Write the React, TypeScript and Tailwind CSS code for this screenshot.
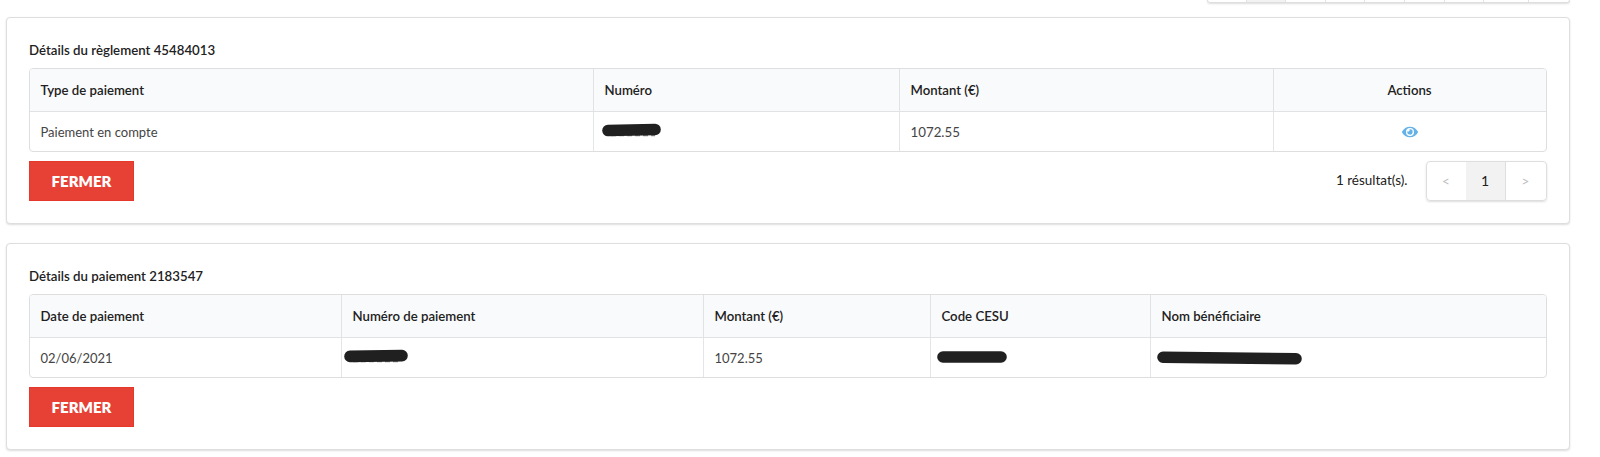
import React from 'react';
import { FaEye } from 'react-icons/fa';

interface Column {
  label: string;
  className: string;
}

interface MaskProps {
  width: number;
  tilt: number;
  ghost?: number;
}

const PAYMENT_COLUMNS: Column[] = [
  { label: 'Type de paiement', className: 'w-[563px] text-left' },
  { label: 'Numéro', className: 'w-[306px] text-left' },
  { label: 'Montant (€)', className: 'w-[374px] text-left' },
  { label: 'Actions', className: 'text-center' },
];

const DETAIL_COLUMNS: Column[] = [
  { label: 'Date de paiement', className: 'w-[311px] text-left' },
  { label: 'Numéro de paiement', className: 'w-[362px] text-left' },
  { label: 'Montant (€)', className: 'w-[227px] text-left' },
  { label: 'Code CESU', className: 'w-[220px] text-left' },
  { label: 'Nom bénéficiaire', className: 'text-left' },
];

// Marker stroke covering a sensitive value
const Mask: React.FC<MaskProps> = ({ width, tilt, ghost = 0 }) => (
  <svg width={width} height="16" viewBox={`0 0 ${width} 16`} className="block">
    {ghost > 0 && (
      <line x1="9" y1="13.6" x2={9 + ghost} y2="13.6" stroke="#8a8a8a" strokeWidth="1.4" strokeDasharray="5 3" />
    )}
    <line x1="6" y1={8 - tilt} x2={width - 6} y2={8 + tilt} stroke="#202020" strokeWidth="11.6" strokeLinecap="round" />
  </svg>
);

const Card: React.FC<{ title: string; children: React.ReactNode }> = ({ title, children }) => (
  <section className="h-[207px] rounded border border-[#dededf] bg-white px-[22px] pt-[22px] shadow-[0_1px_2px_0_rgba(34,36,38,0.15)]">
    <h2 className="mb-[8px] h-5 text-[13.25px] leading-5 font-semibold text-[#212121]">{title}</h2>
    {children}
  </section>
);

const DataTable: React.FC<{ columns: Column[]; children: React.ReactNode }> = ({ columns, children }) => (
  <div className="overflow-hidden rounded border border-[#dededf]">
    <table className="w-full table-fixed border-collapse text-[13px] leading-5">
      <thead>
        <tr className="h-[42px] border-b border-[#e1e2e3] bg-[#f9fafb] text-[13.2px]">
          {columns.map((column) => (
            <th key={column.label} className={`border-l border-[#e1e2e3] px-[11px] font-semibold text-[#212121] first:border-l-0 first:pl-[10.5px] ${column.className}`}>
              {column.label}
            </th>
          ))}
        </tr>
      </thead>
      <tbody>
        <tr className="h-[40px]">{children}</tr>
      </tbody>
    </table>
  </div>
);

const Cell: React.FC<{ className?: string; children: React.ReactNode }> = ({ className = 'px-[11px] pt-[2px]', children }) => (
  <td className={`border-l border-[#e4e5e6] text-[#444444] first:border-l-0 first:pl-[10.5px] ${className}`}>{children}</td>
);

const CloseButton: React.FC = () => (
  <button className="h-10 w-[105px] border border-[#e5372c] bg-[#e74135] text-[15px] leading-5 font-extrabold text-white">
    FERMER
  </button>
);

const App: React.FC = () => (
  <div className="h-[457px] overflow-hidden bg-white pr-[30.5px] pl-[6px] font-[Lato,sans-serif]">
    {/* Bottom edge of the pagination of the list above */}
    <div className="flex h-[17px] items-start justify-end">
      <div className="flex h-[3px] w-[363px] overflow-visible rounded-b border border-t-0 border-[#dededf] shadow-[0_1px_2px_0_rgba(34,36,38,0.15)]">
        <div className="w-[38px]" />
        <div className="w-10 border-x border-[#e1e2e3] bg-[#f2f2f2]" />
        <div className="w-10 border-r border-[#e1e2e3]" />
        <div className="w-[39px] border-r border-[#e1e2e3]" />
        <div className="w-10 border-r border-[#e1e2e3]" />
        <div className="w-10 border-r border-[#e1e2e3]" />
        <div className="w-[39px] border-r border-[#e1e2e3]" />
        <div className="w-[45px] border-r border-[#e1e2e3]" />
      </div>
    </div>

    <main className="flex flex-col gap-[19px]">
      <Card title="Détails du règlement 45484013">
        <DataTable columns={PAYMENT_COLUMNS}>
          <Cell>Paiement en compte</Cell>
          <Cell className="pb-[3px] pl-[8px]">
            <Mask width={59} tilt={-0.5} ghost={44} />
          </Cell>
          <Cell className="px-[11px] pt-[2px] text-[13.3px]">1072.55</Cell>
          <Cell>
            <FaEye className="mx-auto h-4 w-4 text-[#64b2e8]" />
          </Cell>
        </DataTable>
        <div className="mt-[9px] flex items-start justify-between">
          <CloseButton />
          <div className="flex items-center">
            <span className="mr-[18px] pb-[2px] text-[13.5px] text-[#212121]">1 résultat(s).</span>
            <nav className="flex h-10 w-[121px] overflow-hidden rounded border border-[#dededf] text-[14px] shadow-[0_1px_2px_0_rgba(34,36,38,0.15)]">
              <button className="w-[39px] text-[13.5px] text-[#bcbcbc]">&lt;</button>
              <button className="w-10 border-r border-[#dededf] bg-[#f2f2f2] pb-px text-[#212121]">1</button>
              <button className="flex-1 text-[13.5px] text-[#bcbcbc]">&gt;</button>
            </nav>
          </div>
        </div>
      </Card>

      <Card title="Détails du paiement 2183547">
        <DataTable columns={DETAIL_COLUMNS}>
          <Cell>02/06/2021</Cell>
          <Cell className="pb-[2px] pl-[2px]">
            <Mask width={64} tilt={-0.4} ghost={48} />
          </Cell>
          <Cell className="px-[11px] pt-[2px]">1072.55</Cell>
          <Cell className="pl-[6px]">
            <Mask width={70} tilt={0} />
          </Cell>
          <Cell className="pt-[2px] pl-[6px]">
            <Mask width={145} tilt={0.7} />
          </Cell>
        </DataTable>
        <div className="mt-[9px]">
          <CloseButton />
        </div>
      </Card>
    </main>
  </div>
);

export default App;
